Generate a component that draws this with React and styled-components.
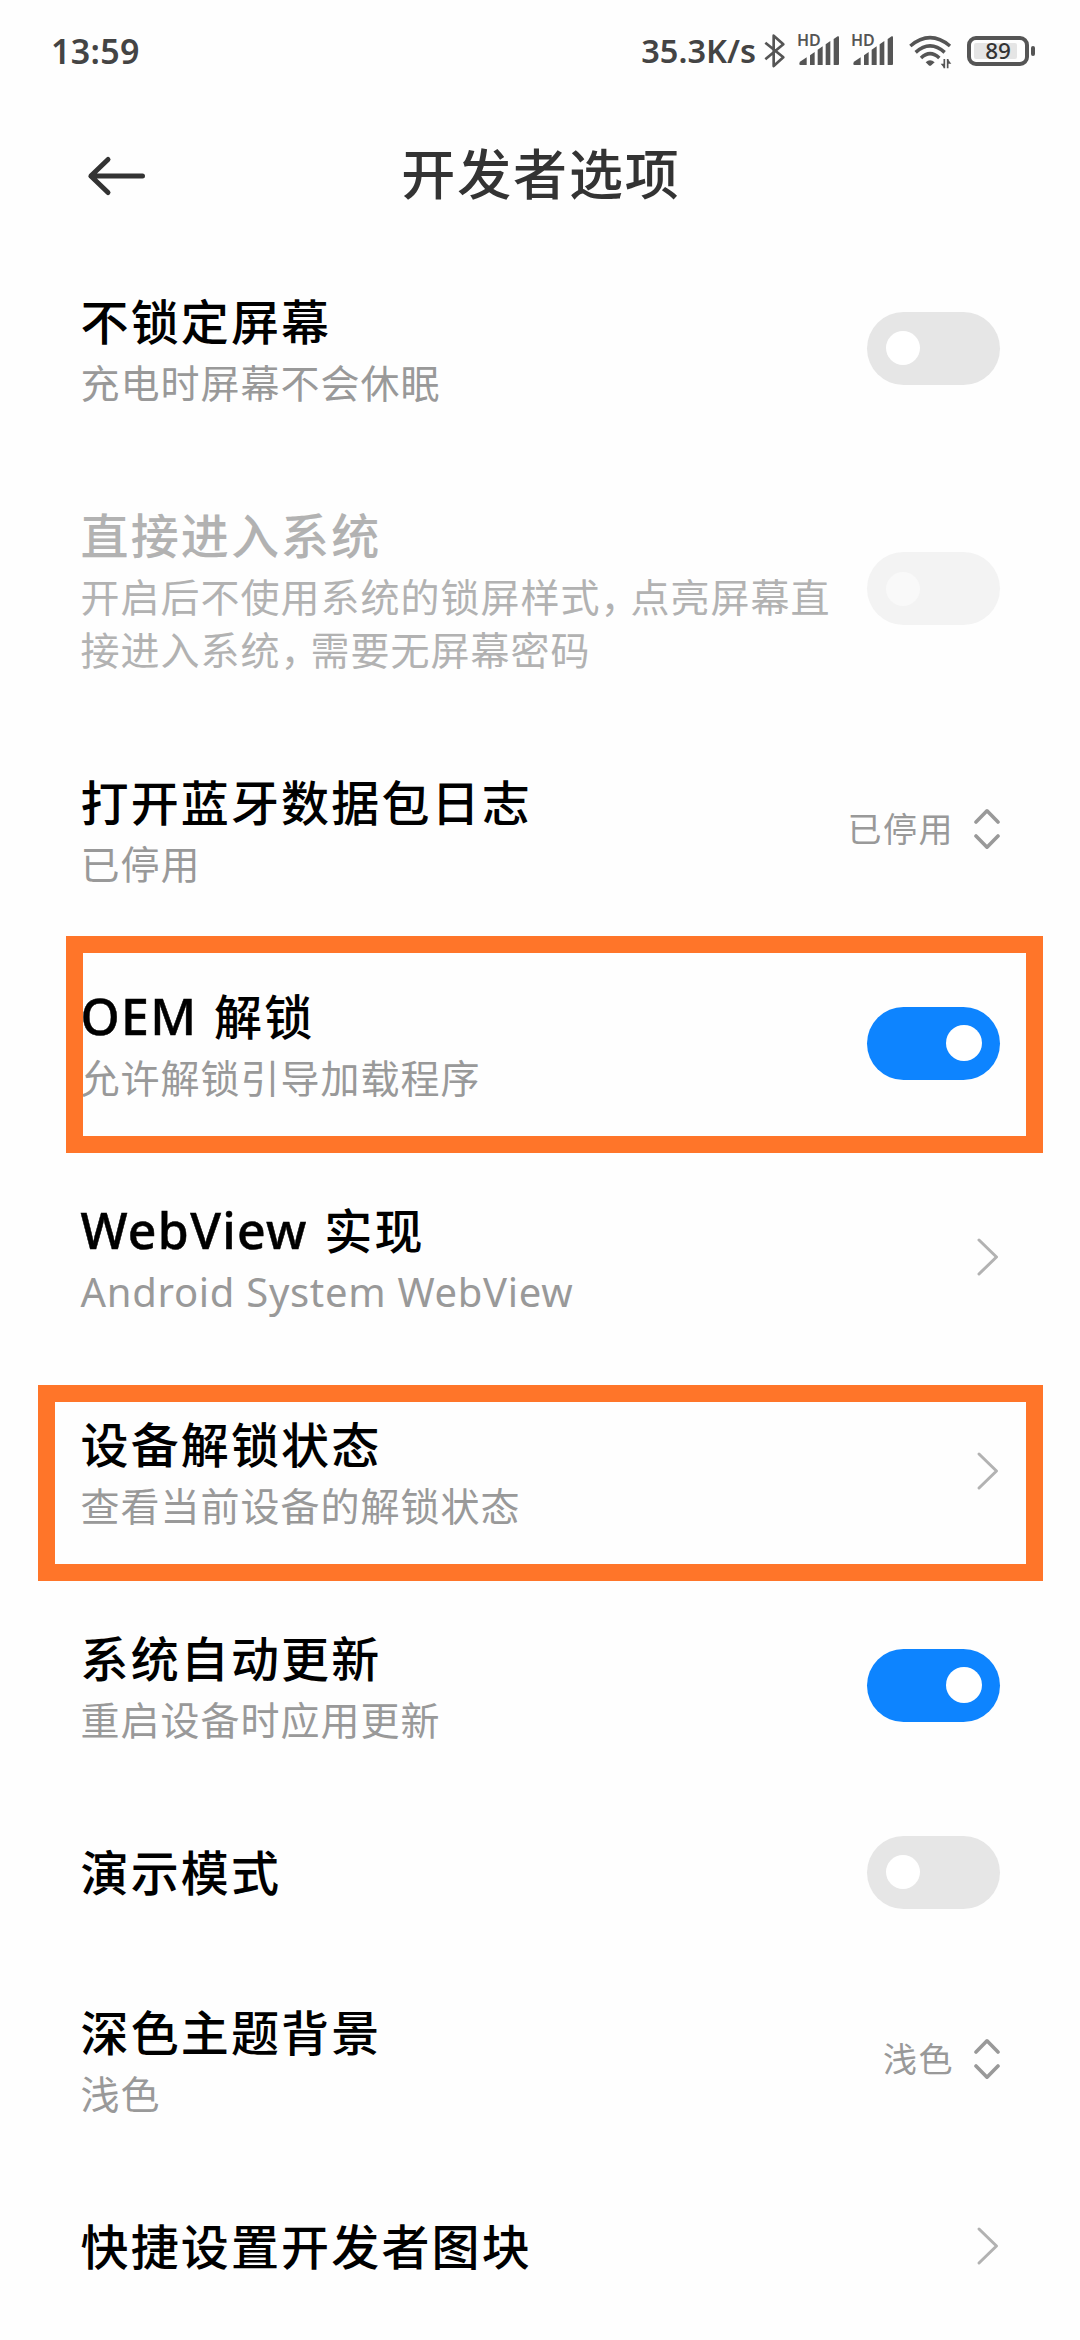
import React from 'react';
import styled, { createGlobalStyle, css } from 'styled-components';

const GlobalStyle = createGlobalStyle`
  * { box-sizing: border-box; }
  body {
    margin: 0;
    background: #fefefe;
    font-family: 'Noto Sans', 'Noto Sans CJK SC', sans-serif;
  }
`;

const Screen = styled.main`
  display: flex;
  flex-direction: column;
  width: 1080px;
  height: 2340px;
  overflow: hidden;
  background: #fefefe;
`;

const StatusBar = styled.div`
  display: flex;
  align-items: center;
  justify-content: space-between;
  height: 102px;
  padding: 0 44px 0 51px;
  color: #444;
`;

const Clock = styled.span`
  font: 600 34px/40px 'Noto Sans', sans-serif;
  letter-spacing: 0.3px;
`;

const StatusIcons = styled.div`
  display: flex;
  align-items: center;
`;

const Speed = styled.span`
  font: 600 32.5px/40px 'Noto Sans', sans-serif;
  margin-right: 8px;
`;

const Glyph = styled.svg`
  display: block;
  width: ${(p) => p.$w}px;
  height: 38px;
  color: #555;
`;

const SignalBox = styled.div`
  position: relative;
  margin-left: 12px;
`;

const HdBadge = styled.span`
  position: absolute;
  left: -1px;
  top: 0;
  font: 600 16px/16px 'Noto Sans', sans-serif;
  color: #555;
`;

const WifiBox = styled.div`
  margin: 0 15px 0 14px;
`;

const Battery = styled.div`
  display: flex;
  align-items: center;
  gap: 2px;
`;

const BatteryBody = styled.div`
  display: flex;
  align-items: center;
  width: 62px;
  height: 30px;
  padding: 3px;
  border: 4px solid #555;
  border-radius: 9px;
`;

const BatteryLevel = styled.div`
  display: flex;
  align-items: center;
  justify-content: center;
  width: 43px;
  height: 16px;
  padding-left: 5px;
  background: #e5e5e5;
  border-radius: 2px;
  font: 500 22.5px/16px 'Noto Sans', sans-serif;
  color: #333;
`;

const BatteryCap = styled.div`
  width: 4px;
  height: 10px;
  margin-right: 1px;
  border-radius: 2px;
  background: #555;
`;

const Header = styled.header`
  display: grid;
  grid-template-columns: 80px 1fr 80px;
  align-items: center;
  height: 139px;
  padding: 9px 80px 0;
`;

const BackIcon = styled.svg`
  display: block;
  width: 64px;
  height: 48px;
  margin-left: 5px;
`;

const HeaderTitle = styled.h1`
  margin: 0;
  font-size: 54px;
  line-height: 80px;
  font-weight: 500;
  letter-spacing: 1.9px;
  text-align: center;
  color: #333;
  padding: 0 0 5px 2px;
`;

const Row = styled.div`
  position: relative;
  display: flex;
  align-items: center;
  justify-content: space-between;
  padding: 48px 80px;
`;

const Texts = styled.div`
  width: 760px;
  padding-left: 0.5px;
  ${(p) => p.$disabled && css`--title: #b2b2b2; --sub: #b2b2b2;`}
`;

const Title = styled.div`
  padding-top: 3px;
  height: 64px;
  font-size: 48px;
  line-height: 60px;
  font-weight: 500;
  letter-spacing: 2.15px;
  white-space: nowrap;
  color: var(--title, #000);
`;

const TitleLatin = styled.span`
  font-size: 50px;
  line-height: 1;
  letter-spacing: 1.3px;
  margin-right: 2px;
  -webkit-text-stroke: 0.5px currentColor;
`;

const SummaryLatin = styled.span`
  font-size: 40px;
  line-height: 1;
  letter-spacing: 0.7px;
`;

const Summary = styled.div`
  padding-top: 3px;
  margin-bottom: -2px;
  font-size: 39px;
  line-height: 53px;
  letter-spacing: 1px;
  white-space: nowrap;
  color: var(--sub, #999);
`;

const Line = styled.div`
  height: 53px;
`;

const Comma = styled.span`
  letter-spacing: -9px;
`;

const Highlight = styled.div`
  position: absolute;
  left: ${(p) => p.$left}px;
  right: 37px;
  top: ${(p) => p.$top}px;
  height: ${(p) => p.$height}px;
  border: 17px solid #ff7529;
  pointer-events: none;
`;

const Track = styled.div`
  display: flex;
  align-items: center;
  justify-content: ${(p) => (p.$on ? 'flex-end' : 'flex-start')};
  width: 133px;
  height: 73px;
  margin: -10px 0;
  padding: 0 ${(p) => (p.$on ? 18 : 19)}px;
  border-radius: 37px;
  background: ${(p) => (p.$on ? '#0d84ff' : p.$disabled ? '#f3f3f3' : '#e6e6e6')};
`;

const Knob = styled.div`
  width: ${(p) => (p.$on ? 36 : 34)}px;
  height: ${(p) => (p.$on ? 36 : 34)}px;
  border-radius: 50%;
  background: ${(p) => (p.$disabled ? '#f9f9f9' : '#fff')};
`;

const Choice = styled.div`
  display: flex;
  align-items: center;
  gap: 20px;
  font-size: 34px;
  line-height: 48px;
  letter-spacing: 1.5px;
  color: #999;
`;

const ChevronSvg = styled.svg`
  display: block;
  width: 26px;
  height: 42px;
`;

const Toggle = ({ on, disabled }) => (
  <Track $on={on} $disabled={disabled}>
    <Knob $on={on} $disabled={disabled} />
  </Track>
);

const Chevron = () => (
  <ChevronSvg viewBox="0 0 26 42" fill="none" stroke="#b2b2b2" strokeWidth="3" strokeLinecap="round" strokeLinejoin="round">
    <path d="M5 4 L22.5 21 L5 38" />
  </ChevronSvg>
);

const UpDown = () => (
  <ChevronSvg viewBox="0 0 26 42" fill="none" stroke="#999" strokeWidth="3.6" strokeLinecap="round" strokeLinejoin="round">
    <path d="M2 14 L13 2.8 L24 14 M2 28 L13 39.2 L24 28" />
  </ChevronSvg>
);

const Selector = ({ value }) => (
  <Choice>
    <span>{value}</span>
    <UpDown />
  </Choice>
);

const Signal = () => (
  <SignalBox>
    <Glyph $w={42} viewBox="534 36 126 114" fill="currentColor">
      <path d="M538 131 Q538 127 542 124 L560 112 V135 H541 Q538 135 538 131Z" />
      <path d="M570 106 L584 96 V135 H570Z M593 89 L608 79 V135 H593Z M617 73 L631 63 V135 H617Z" />
      <path d="M641 57 L653 49 Q657 47 657 52 V132 Q657 135 654 135 H641Z" />
    </Glyph>
    <HdBadge>HD</HdBadge>
  </SignalBox>
);

const Bluetooth = () => (
  <Glyph $w={22} viewBox="432 36 66 114" fill="none" stroke="currentColor" strokeWidth="8" strokeLinejoin="round">
    <path d="M436 68 L490 112 L461 138 V47 L490 73 L436 118" />
  </Glyph>
);

const Wifi = () => (
  <WifiBox>
    <Glyph $w={44} viewBox="864 36 132 114" fill="none" stroke="currentColor" strokeWidth="10.5">
      <path d="M871 78 Q930 28 990 78" />
      <path d="M887 97 Q930 58 974 97" />
      <path d="M903 114 Q930 88 958 114" />
      <path d="M917 127 Q930 115 944 127 L934 136 Q930 139 926 136Z" fill="currentColor" stroke="none" />
      <path d="M973 117 V145 M983 145 V117" strokeWidth="5" />
      <path d="M962 131 L973 145 V131Z M994 131 L983 117 V131Z" fill="currentColor" stroke="none" />
    </Glyph>
  </WifiBox>
);

const rows = [
  { title: '不锁定屏幕', lines: ['充电时屏幕不会休眠'], end: <Toggle /> },
  {
    title: '直接进入系统',
    disabled: true,
    lines: [
      <>开启后不使用系统的锁屏样式<Comma>，</Comma>点亮屏幕直</>,
      <>接进入系统<Comma>，</Comma>需要无屏幕密码</>,
    ],
    end: <Toggle disabled />,
  },
  { title: '打开蓝牙数据包日志', lines: ['已停用'], end: <Selector value="已停用" /> },
  {
    title: <><TitleLatin>OEM</TitleLatin> 解锁</>,
    lines: ['允许解锁引导加载程序'],
    end: <Toggle on />,
    mark: { $left: 66, $top: 0, $height: 217 },
  },
  {
    title: <><TitleLatin>WebView</TitleLatin> 实现</>,
    lines: [<SummaryLatin>Android System WebView</SummaryLatin>],
    end: <Chevron />,
  },
  {
    title: '设备解锁状态',
    lines: ['查看当前设备的解锁状态'],
    end: <Chevron />,
    mark: { $left: 38, $top: 21, $height: 196 },
  },
  { title: '系统自动更新', lines: ['重启设备时应用更新'], end: <Toggle on /> },
  { title: '演示模式', lines: [], end: <Toggle /> },
  { title: '深色主题背景', lines: ['浅色'], end: <Selector value="浅色" /> },
  { title: '快捷设置开发者图块', lines: [], end: <Chevron /> },
];

export default function App() {
  return (
    <Screen>
      <GlobalStyle />
      <StatusBar>
        <Clock>13:59</Clock>
        <StatusIcons>
          <Speed>35.3K/s</Speed>
          <Bluetooth />
          <Signal />
          <Signal />
          <Wifi />
          <Battery>
            <BatteryBody>
              <BatteryLevel>89</BatteryLevel>
            </BatteryBody>
            <BatteryCap />
          </Battery>
        </StatusIcons>
      </StatusBar>
      <Header>
        <BackIcon viewBox="0 0 64 48" fill="none" stroke="#333" strokeWidth="5" strokeLinecap="round" strokeLinejoin="round">
          <path d="M23 7.5 L5.8 24 L23 40.5 M6 24 H57.5" />
        </BackIcon>
        <HeaderTitle>开发者选项</HeaderTitle>
      </Header>
      {rows.map((row, index) => (
        <Row key={index}>
          <Texts $disabled={row.disabled}>
            <Title>{row.title}</Title>
            {row.lines.length > 0 && (
              <Summary>
                {row.lines.map((line, i) => (
                  <Line key={i}>{line}</Line>
                ))}
              </Summary>
            )}
          </Texts>
          {row.end}
          {row.mark && <Highlight {...row.mark} />}
        </Row>
      ))}
    </Screen>
  );
}
